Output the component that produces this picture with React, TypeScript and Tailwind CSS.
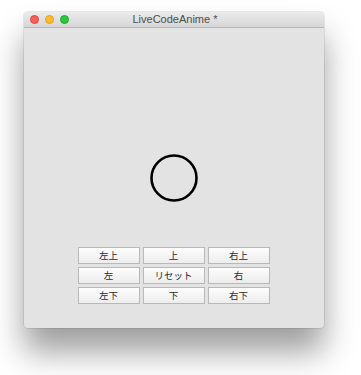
const buttons = ['左上', '上', '右上', '左', 'リセット', '右', '左下', '下', '右下']

export default function App() {
	return (
		<div className="w-[361px] h-[375px] bg-white overflow-hidden pt-[12px] pl-[24px]">
			{/* window */}
			<div className="w-[300px] h-[316px] flex flex-col rounded-[4px] bg-[#e3e3e3] shadow-[0_24px_32px_rgba(0,0,0,0.38),0_0_0_1px_rgba(0,0,0,0.08)] overflow-hidden">
				{/* title bar */}
				<div className="relative h-[16px] flex items-center justify-center bg-gradient-to-b from-[#ebebeb] to-[#d6d6d6] border-b border-[#b9b9b9]">
					<div className="absolute left-[6px] top-[3px] flex gap-[6px]">
						<span className="w-[9px] h-[9px] rounded-full bg-[#fc5f57] border-[0.5px] border-[#e0443e]" />
						<span className="w-[9px] h-[9px] rounded-full bg-[#fdbc2e] border-[0.5px] border-[#dea123]" />
						<span className="w-[9px] h-[9px] rounded-full bg-[#29c83f] border-[0.5px] border-[#1aab29]" />
					</div>
					<span className="ml-[2px] text-[11px] leading-none text-[#4d4d4d] font-['Liberation_Sans','Noto_Sans',sans-serif]">
						LiveCodeAnime *
					</span>
				</div>

				{/* content */}
				<div className="flex-1 flex flex-col items-center pt-[126px]">
					<svg width="48" height="48" viewBox="0 0 48 48" className="ml-[-1px]">
						<circle cx="24" cy="24" r="22.5" fill="none" stroke="#000" strokeWidth="2.6" />
					</svg>
					<div className="mt-[45px] grid grid-cols-3 gap-x-[3px] gap-y-[3px] ml-[-1px]">
						{buttons.map((b) => (
							<button
								key={b}
								className="w-[62px] h-[17px] flex items-center justify-center border border-[#b8b8b8] bg-gradient-to-b from-[#fdfdfd] to-[#ededed] text-[9.5px] leading-none text-[#2a2a2a] font-['Noto_Sans_CJK_JP',sans-serif]"
							>
								{b}
							</button>
						))}
					</div>
				</div>
			</div>
		</div>
	)
}
